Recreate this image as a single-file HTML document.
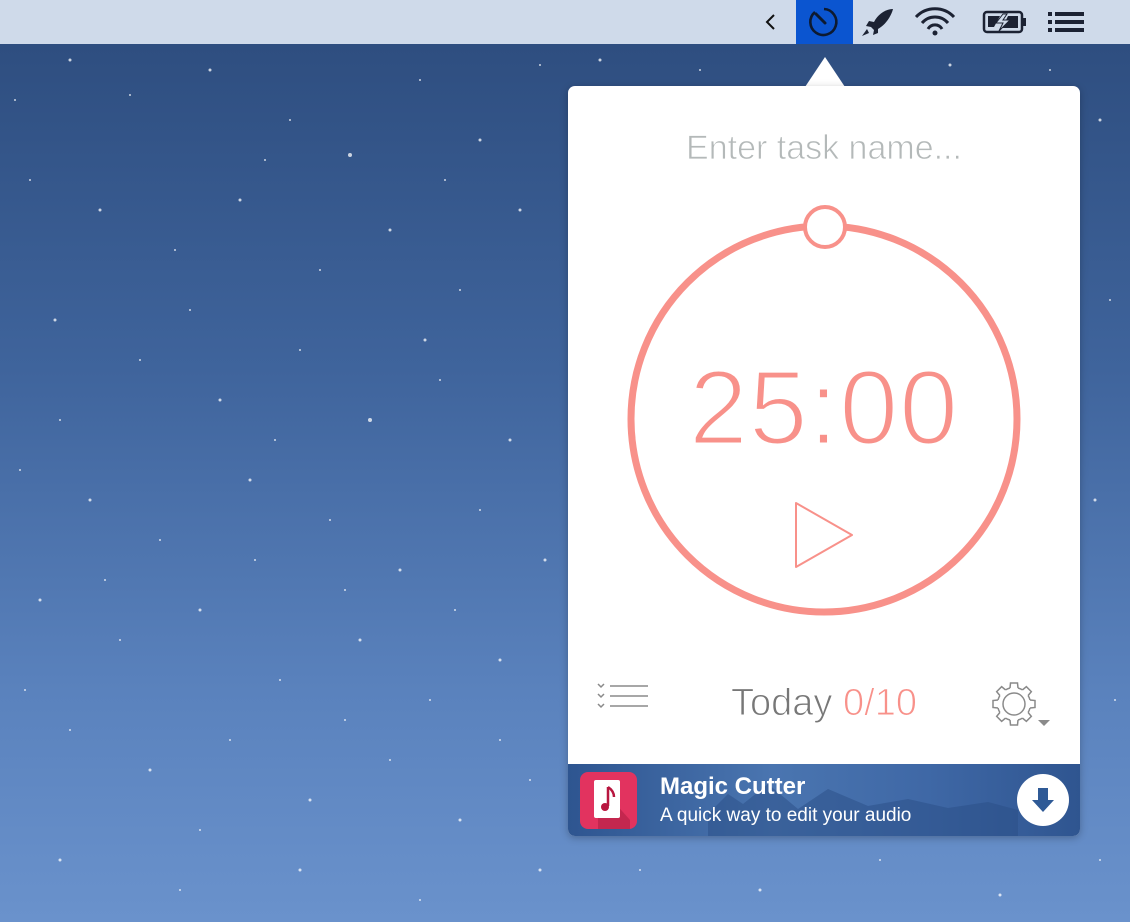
<!DOCTYPE html>
<html><head><meta charset="utf-8"><style>
*{margin:0;padding:0;box-sizing:border-box}
body{width:1130px;height:922px;overflow:hidden;position:relative;font-family:"Liberation Sans",sans-serif;background:linear-gradient(#2c4b7c 0%,#3f649c 40%,#5a82bd 75%,#6a92cc 100%)}
#bar{position:absolute;left:0;top:0;width:1130px;height:44px;background:#cfdaea}
#hl{position:absolute;left:796px;top:0;width:57px;height:44px;background:#0b55d0}
#pop{position:absolute;left:568px;top:86px;width:512px;height:750px;background:#fff;border-radius:7px;overflow:hidden;box-shadow:0 2px 8px rgba(0,0,0,.25)}
#arrow{position:absolute;left:805px;top:57px;width:0;height:0;border-left:20px solid transparent;border-right:20px solid transparent;border-bottom:30px solid #fff}
.t{position:absolute;white-space:nowrap}
.thin{-webkit-text-stroke:1.2px #fff;paint-order:normal}
#ad{position:absolute;left:0;top:678px;width:512px;height:72px;background:linear-gradient(90deg,#2e5590 0%,#4a75b0 40%,#3f68a6 70%,#2f5590 100%)}
</style></head><body>
<svg width="1130" height="922" style="position:absolute;left:0;top:0" fill="#fff">
<g opacity=".75">
<circle cx="70" cy="60" r="1.5"/><circle cx="130" cy="95" r="1"/><circle cx="210" cy="70" r="1.5"/><circle cx="290" cy="120" r="1"/><circle cx="350" cy="155" r="2"/><circle cx="420" cy="80" r="1"/><circle cx="480" cy="140" r="1.5"/><circle cx="540" cy="65" r="1"/><circle cx="30" cy="180" r="1"/><circle cx="100" cy="210" r="1.5"/><circle cx="175" cy="250" r="1"/><circle cx="240" cy="200" r="1.5"/><circle cx="320" cy="270" r="1"/><circle cx="390" cy="230" r="1.5"/><circle cx="460" cy="290" r="1"/><circle cx="520" cy="210" r="1.5"/><circle cx="55" cy="320" r="1.5"/><circle cx="140" cy="360" r="1"/><circle cx="220" cy="400" r="1.5"/><circle cx="300" cy="350" r="1"/><circle cx="370" cy="420" r="2"/><circle cx="440" cy="380" r="1"/><circle cx="510" cy="440" r="1.5"/><circle cx="20" cy="470" r="1"/><circle cx="90" cy="500" r="1.5"/><circle cx="160" cy="540" r="1"/><circle cx="250" cy="480" r="1.5"/><circle cx="330" cy="520" r="1"/><circle cx="400" cy="570" r="1.5"/><circle cx="480" cy="510" r="1"/><circle cx="545" cy="560" r="1.5"/><circle cx="40" cy="600" r="1.5"/><circle cx="120" cy="640" r="1"/><circle cx="200" cy="610" r="1.5"/><circle cx="280" cy="680" r="1"/><circle cx="360" cy="640" r="1.5"/><circle cx="430" cy="700" r="1"/><circle cx="500" cy="660" r="1.5"/><circle cx="70" cy="730" r="1"/><circle cx="150" cy="770" r="1.5"/><circle cx="230" cy="740" r="1"/><circle cx="310" cy="800" r="1.5"/><circle cx="390" cy="760" r="1"/><circle cx="460" cy="820" r="1.5"/><circle cx="530" cy="780" r="1"/><circle cx="60" cy="860" r="1.5"/><circle cx="180" cy="890" r="1"/><circle cx="300" cy="870" r="1.5"/><circle cx="420" cy="900" r="1"/><circle cx="540" cy="870" r="1.5"/><circle cx="640" cy="870" r="1"/><circle cx="760" cy="890" r="1.5"/><circle cx="880" cy="860" r="1"/><circle cx="1000" cy="895" r="1.5"/><circle cx="1100" cy="860" r="1"/><circle cx="1100" cy="120" r="1.5"/><circle cx="1110" cy="300" r="1"/><circle cx="1095" cy="500" r="1.5"/><circle cx="1115" cy="700" r="1"/><circle cx="600" cy="60" r="1.5"/><circle cx="700" cy="70" r="1"/><circle cx="950" cy="65" r="1.5"/><circle cx="1050" cy="70" r="1"/>
<circle cx="15" cy="100" r="1"/><circle cx="265" cy="160" r="1"/><circle cx="445" cy="180" r="1"/><circle cx="190" cy="310" r="1"/><circle cx="425" cy="340" r="1.5"/><circle cx="275" cy="440" r="1"/><circle cx="60" cy="420" r="1"/><circle cx="345" cy="590" r="1"/><circle cx="105" cy="580" r="1"/><circle cx="455" cy="610" r="1"/><circle cx="255" cy="560" r="1"/><circle cx="25" cy="690" r="1"/><circle cx="345" cy="720" r="1"/><circle cx="200" cy="830" r="1"/><circle cx="500" cy="740" r="1"/>
</g></svg>
<div id="bar"></div>
<div id="hl"></div>
<svg width="1130" height="44" style="position:absolute;left:0;top:0">
<path d="M774 15 L767 22 L774 29" fill="none" stroke="#111" stroke-width="2"/>
<path d="M815 12 A13 13 0 1 0 824 9" fill="none" stroke="#0d1a30" stroke-width="2.6"/>
<path d="M816 14 L825 23" stroke="#0d1a30" stroke-width="3" stroke-linecap="round"/>
<path d="M893 9 C886 9 878 14 874 22 L869 21 L866 26 L871 27 L874 30 L873 35 L878 33 L878 29 C885 25 891 17 893 9Z" fill="#1c2233"/>
<path d="M867 29 L862 36 L869 33Z" fill="#1c2233"/>
<path d="M916 17 A26 26 0 0 1 954 17 M922 23 A17 17 0 0 1 948 23 M928 29 A8 8 0 0 1 942 29" fill="none" stroke="#1c2233" stroke-width="3"/>
<circle cx="935" cy="33" r="2.5" fill="#1c2233"/>
<rect x="984" y="12" width="38" height="20" rx="3" fill="none" stroke="#1c2233" stroke-width="2.5"/>
<rect x="1023" y="18" width="3" height="8" fill="#1c2233"/>
<path d="M988 16 H1000 L994 27 H988Z M1018 16 H1008 L1002 28 H1018Z" fill="#1c2233"/>
<path d="M1003 14 L996 23 H1003 L999 31 L1010 20 H1003 L1007 14Z" fill="#cfdaea" stroke="#1c2233" stroke-width="1"/>
<rect x="1048" y="12" width="4" height="4" fill="#1c2233"/><rect x="1055" y="12" width="29" height="4" fill="#1c2233"/>
<rect x="1048" y="20" width="4" height="4" fill="#1c2233"/><rect x="1055" y="20" width="29" height="4" fill="#1c2233"/>
<rect x="1048" y="28" width="4" height="4" fill="#1c2233"/><rect x="1055" y="28" width="29" height="4" fill="#1c2233"/>
</svg>
<div id="arrow"></div>
<div id="pop">
<div class="t thin" style="left:0;width:512px;text-align:center;top:43px;font-size:34px;color:#b4b9b9;-webkit-text-stroke:0.8px #fff">Enter task name...</div>
<svg width="512" height="560" style="position:absolute;left:0;top:0">
<circle cx="256" cy="333" r="193" fill="none" stroke="#f8918a" stroke-width="7"/>
<circle cx="257" cy="141" r="20" fill="#fff" stroke="#f8918a" stroke-width="4"/>
<path d="M228 417 L228 481 L284 449Z" fill="none" stroke="#f8918a" stroke-width="2" stroke-linejoin="round"/>
</svg>
<div class="t thin" style="left:0;width:512px;text-align:center;top:262px;font-size:106px;color:#f8918a;letter-spacing:1px;-webkit-text-stroke:3px #fff">25:00</div>
<svg width="512" height="80" style="position:absolute;left:0;top:590px">
<g fill="none" stroke="#8a8a8a" stroke-width="1.5">
<path d="M30 8 L33 11 L36 8 M30 18 L33 21 L36 18 M30 28 L33 31 L36 28"/>
<path d="M42 10 H80 M42 20 H80 M42 30 H80"/>
<circle cx="446" cy="28" r="11"/>
<g transform="translate(446 28)" fill="#fff">
<path d="M-4,-16 L-3.5,-21 H3.5 L4,-16"/>
<path d="M-4,-16 L-3.5,-21 H3.5 L4,-16" transform="rotate(45)"/>
<path d="M-4,-16 L-3.5,-21 H3.5 L4,-16" transform="rotate(90)"/>
<path d="M-4,-16 L-3.5,-21 H3.5 L4,-16" transform="rotate(135)"/>
<path d="M-4,-16 L-3.5,-21 H3.5 L4,-16" transform="rotate(180)"/>
<path d="M-4,-16 L-3.5,-21 H3.5 L4,-16" transform="rotate(225)"/>
<path d="M-4,-16 L-3.5,-21 H3.5 L4,-16" transform="rotate(270)"/>
<path d="M-4,-16 L-3.5,-21 H3.5 L4,-16" transform="rotate(315)"/>
<path d="M4,-16 A16.5 16.5 0 0 1 8.5,-14.1 M14.1,-8.5 A16.5 16.5 0 0 1 16,-4 M16,4 A16.5 16.5 0 0 1 14.1,8.5 M8.5,14.1 A16.5 16.5 0 0 1 4,16 M-4,16 A16.5 16.5 0 0 1 -8.5,14.1 M-14.1,8.5 A16.5 16.5 0 0 1 -16,4 M-16,-4 A16.5 16.5 0 0 1 -14.1,-8.5 M-8.5,-14.1 A16.5 16.5 0 0 1 -4,-16" fill="none"/>
</g>
</g>
<path d="M470 44 H482 L476 50Z" fill="#8a8a8a"/>
</svg>
<div class="t thin" style="left:0;width:512px;text-align:center;top:596px;font-size:38px;color:#777;-webkit-text-stroke:1px #fff">Today <span style="color:#f8918a">0/10</span></div>
<div id="ad">
<svg width="512" height="72" style="position:absolute;left:0;top:0">
<path d="M140 50 L160 30 L175 40 L200 20 L230 45 L260 25 L300 42 L340 35 L380 44 L420 38 L450 46 L450 72 L140 72Z" fill="#2a4d85" opacity=".5"/>
<rect x="12" y="8" width="57" height="57" rx="8" fill="#e2335f"/>
<path d="M30 20 L62 56 L62 65 L30 65Z" fill="#b82248" opacity=".7"/>
<rect x="26" y="16" width="26" height="38" rx="2" fill="#fff"/>
<path d="M40 23 V42" stroke="#b8163f" stroke-width="2.5"/>
<circle cx="37" cy="43" r="4" fill="#b8163f"/>
<path d="M40 23 Q46 27 46 33" fill="none" stroke="#b8163f" stroke-width="2.5"/>
<circle cx="475" cy="36" r="26" fill="#fff"/>
<path d="M470 24 H480 V36 H486 L475 48 L464 36 H470Z" fill="#2f5a96"/>
</svg>
<div class="t" style="left:92px;top:9px;font-size:24px;color:#fff;font-weight:bold">Magic Cutter</div>
<div class="t" style="left:92px;top:41px;font-size:19px;color:#fff">A quick way to edit your audio</div>
</div>
</div>
</body></html>
